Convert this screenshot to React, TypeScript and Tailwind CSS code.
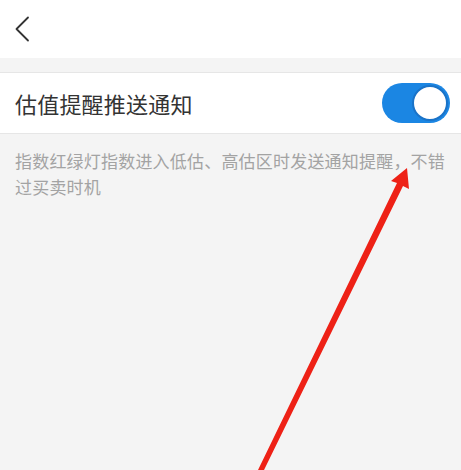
import { useState } from "react";

export default function App() {
  const [enabled, setEnabled] = useState(true);

  return (
    <div
      className="relative w-[461px] h-[470px] overflow-hidden bg-[#f4f4f4]"
      style={{ fontFamily: '"Noto Sans CJK SC", "Noto Sans", sans-serif' }}
    >
      {/* Header */}
      <header className="h-[58px] bg-white flex items-center pl-[14px]">
        <button className="w-[20px] h-[28px] flex items-center">
          <svg width="16" height="26" viewBox="0 0 16 26" fill="none">
            <path d="M14 1.5 L2.5 13 L14 24.5" stroke="#333" strokeWidth="1.8" strokeLinecap="round" strokeLinejoin="round" />
          </svg>
        </button>
      </header>

      {/* Setting row */}
      <div className="mt-[14px] h-[62px] bg-white border-y border-[#e6e6e6] flex items-center justify-between pl-[15px] pr-[11px]">
        <span className="text-[22px] leading-none text-[#333] tracking-[0.2px]">估值提醒推送通知</span>
        <button
          onClick={() => setEnabled(!enabled)}
          className={`w-[68px] h-[40px] rounded-full flex items-center p-[2px] ${enabled ? "bg-[#1b86e3] justify-end" : "bg-[#ddd] justify-start"}`}
        >
          <span className="w-[36px] h-[36px] rounded-full bg-white border-[2px] border-[#1a73c8]" />
        </button>
      </div>

      {/* Description */}
      <p className="px-[15px] pt-[14px] text-[17px] leading-[26px] text-[#a3a3a3] tracking-[0.2px]">
        指数红绿灯指数进入低估、高估区时发送通知提醒，不错过买卖时机
      </p>

      {/* Annotation arrow */}
      <svg className="absolute inset-0 pointer-events-none" width="461" height="470" viewBox="0 0 461 470">
        <polygon
          points="407,168 391,181 397,183 258,470 264,470 403,186 409,189"
          fill="#ee2116"
        />
      </svg>
    </div>
  );
}
